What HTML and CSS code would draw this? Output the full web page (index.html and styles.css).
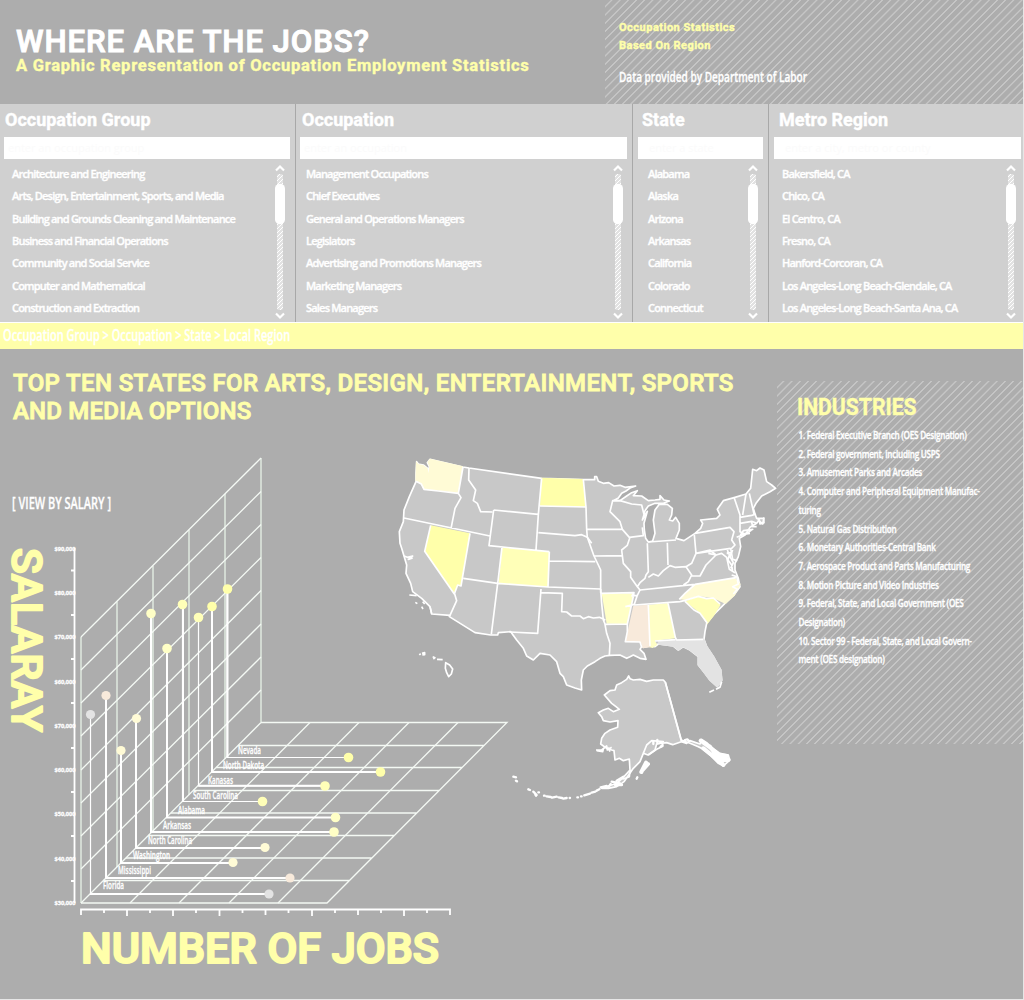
FILE: index.html
```html
<!DOCTYPE html>
<html lang="en">
<head>
<meta charset="utf-8">
<title>Where Are the Jobs?</title>
<link rel="stylesheet" href="styles.css">
</head>
<body>
<svg class="defs" width="0" height="0">
  <defs>
    <symbol id="scroll" viewBox="0 0 12 156">
      <path class="scroll-arrow" d="M2 6.5L6 2.5L10 6.5M2 149.500L6 153.500L10 149.500"/>
      <rect x="3" y="10" width="6" height="136" rx="2" fill="url(#thin)"/>
      <rect x="1" y="20" width="10" height="40" rx="4.500" fill="#fff"/>
    </symbol>
    <pattern id="thin" width="4" height="4" patternUnits="userSpaceOnUse">
      <rect width="4" height="4" fill="#e2e2e2"/>
      <path d="M-1 1L1 -1M0 4L4 0M3 5L5 3" stroke="#fff" stroke-width="1"/>
    </pattern>
  </defs>
</svg>
<header class="header">
  <div class="brand">
    <h1 class="title"><span>WHERE ARE THE JOBS?</span></h1>
    <p class="subtitle"><span>A Graphic Representation of Occupation Employment Statistics</span></p>
  </div>
  <div class="source hatch">
    <p class="source-head"><span>Occupation Statistics</span></p>
    <p class="source-head"><span class="region">Based On Region</span></p>
    <p class="source-by"><span>Data provided by Department of Labor</span></p>
  </div>
</header>
<section class="filters">
  <div class="filter group">
    <h2><span>Occupation Group</span></h2>
    <div class="search">enter an occupation group</div>
    <div class="options">
      <ul>
        <li>Architecture and Engineering</li>
        <li>Arts, Design, Entertainment, Sports, and Media</li>
        <li>Building and Grounds Cleaning and Maintenance</li>
        <li>Business and Financial Operations</li>
        <li>Community and Social Service</li>
        <li>Computer and Mathematical</li>
        <li>Construction and Extraction</li>
      </ul>
      <svg class="scroll" width="12" height="156"><use href="#scroll"/></svg>
    </div>
  </div>
  <div class="filter occupation">
    <h2><span>Occupation</span></h2>
    <div class="search">enter an occupation</div>
    <div class="options">
      <ul>
        <li>Management Occupations</li>
        <li>Chief Executives</li>
        <li>General and Operations Managers</li>
        <li>Legislators</li>
        <li>Advertising and Promotions Managers</li>
        <li>Marketing Managers</li>
        <li>Sales Managers</li>
      </ul>
      <svg class="scroll" width="12" height="156"><use href="#scroll"/></svg>
    </div>
  </div>
  <div class="filter state">
    <h2><span>State</span></h2>
    <div class="search">enter a state</div>
    <div class="options">
      <ul>
        <li>Alabama</li>
        <li>Alaska</li>
        <li>Arizona</li>
        <li>Arkansas</li>
        <li>California</li>
        <li>Colorado</li>
        <li>Connecticut</li>
      </ul>
      <svg class="scroll" width="12" height="156"><use href="#scroll"/></svg>
    </div>
  </div>
  <div class="filter metro">
    <h2><span>Metro Region</span></h2>
    <div class="search">enter a city, metro or county</div>
    <div class="options">
      <ul>
        <li>Bakersfield, CA</li>
        <li>Chico, CA</li>
        <li>El Centro, CA</li>
        <li>Fresno, CA</li>
        <li>Hanford-Corcoran, CA</li>
        <li>Los Angeles-Long Beach-Glendale, CA</li>
        <li>Los Angeles-Long Beach-Santa Ana, CA</li>
      </ul>
      <svg class="scroll" width="12" height="156"><use href="#scroll"/></svg>
    </div>
  </div>
</section>
<nav class="crumbs"><span>Occupation Group &gt; Occupation &gt; State &gt; Local Region</span></nav>
<main class="main">
  <div class="report">
    <h2 class="report-title"><span class="l1">TOP TEN STATES FOR ARTS, DESIGN, ENTERTAINMENT, SPORTS</span><span class="l2">AND MEDIA OPTIONS</span></h2>
    <svg class="figure" width="777" height="573" viewBox="0 427 777 573">
      <text class="view" x="12" y="508.500" textLength="99" lengthAdjust="spacingAndGlyphs">[ VIEW BY SALARY ]</text>
      <text class="axis-name" transform="translate(12 548) rotate(90)" textLength="184" lengthAdjust="spacingAndGlyphs">SALARAY</text>
      <text class="axis-name" x="81" y="963" textLength="358" lengthAdjust="spacingAndGlyphs">NUMBER OF JOBS</text>

      <g class="bars">
        <path d="M81 637V903M117 601.500V867M153 566V831M189 530V795M225 494V759M261 458V722"/>
      </g>
      <g class="grid">
        <path d="M81 637L261 458M81 670L261 491.500M81 703L261 524.500M81 736L261 557.500M81 770L261 590.500M81 803L261 624M81 836L261 657M81 869L261 690M81 903L261 722.500"/>
        <path d="M261 722.500H507L327 903H81M238 745.500H484M216 767.500H462M193 790.500H439M171 813H417M148 835.500H394M126 858H372M103 880.500H349"/>
        <path d="M130 903L310 722.500M179 903L359 722.500M229 903L409 722.500M278 903L458 722.500"/>
      </g>

      <g class="axis">
        <path d="M74.500 548V903M71 570.500H74M71 615H74M71 659H74M71 703H74M71 748H74M71 792H74M71 836H74M71 881H74"/>
        <path d="M81 915V909.500H450V915M127 910V916M173 910V916M219.500 910V916M265.500 910V915M312 910V916M358 910V915M404 910V916"/>
        <path d="M104 910V913M150 910V913M196 910V913M242.500 910V913M288.500 910V913M335 910V913M381 910V913M427 910V913"/>
      </g>
      <g class="ticks">
        <text x="54.500" y="551" textLength="21" lengthAdjust="spacingAndGlyphs">$90,000</text>
        <text x="54.500" y="595" textLength="21" lengthAdjust="spacingAndGlyphs">$80,000</text>
        <text x="54.500" y="639" textLength="21" lengthAdjust="spacingAndGlyphs">$70,000</text>
        <text x="54.500" y="683.500" textLength="21" lengthAdjust="spacingAndGlyphs">$60,000</text>
        <text x="54.500" y="728" textLength="21" lengthAdjust="spacingAndGlyphs">$70,000</text>
        <text x="54.500" y="772" textLength="21" lengthAdjust="spacingAndGlyphs">$60,000</text>
        <text x="54.500" y="816" textLength="21" lengthAdjust="spacingAndGlyphs">$50,000</text>
        <text x="54.500" y="860.500" textLength="21" lengthAdjust="spacingAndGlyphs">$40,000</text>
        <text x="54.500" y="905" textLength="21" lengthAdjust="spacingAndGlyphs">$30,000</text>
      </g>

      <g class="stems">
        <path d="M90.500 714V894H269M198.500 617V786H325M182.500 604V801.500H262M227 589V757.500H348"/>
        <path class="strong" d="M106 695V878H290M121 751V863H233M136 718V848H265M151 613V832H334M167 648V817.500H335M212 606V772H380M227.500 589V757M183 604V801M198.500 785.800H325M90 894H269"/>
      </g>
      <g class="names">
        <text x="238" y="754" textLength="23" lengthAdjust="spacingAndGlyphs">Nevada</text>
        <text x="223" y="769" textLength="41" lengthAdjust="spacingAndGlyphs">North Dakota</text>
        <text x="208" y="784" textLength="25" lengthAdjust="spacingAndGlyphs">Kanasas</text>
        <text x="193" y="799" textLength="45" lengthAdjust="spacingAndGlyphs">South Carolina</text>
        <text x="178" y="814" textLength="27" lengthAdjust="spacingAndGlyphs">Alabama</text>
        <text x="163" y="829" textLength="28" lengthAdjust="spacingAndGlyphs">Arkansas</text>
        <text x="148" y="844" textLength="44" lengthAdjust="spacingAndGlyphs">North Carolina</text>
        <text x="133" y="859" textLength="37" lengthAdjust="spacingAndGlyphs">Washington</text>
        <text x="118" y="874" textLength="33" lengthAdjust="spacingAndGlyphs">Mississippi</text>
        <text x="103" y="889" textLength="21" lengthAdjust="spacingAndGlyphs">Florida</text>
      </g>
      <g class="c1"><circle cx="90.500" cy="714.500" r="4.600"/><circle cx="269" cy="894" r="4.600"/></g>
      <g class="c2"><circle cx="106" cy="695.500" r="4.600"/><circle cx="290" cy="878" r="4.600"/></g>
      <g class="c3"><circle cx="121" cy="750.500" r="4.600"/><circle cx="233" cy="862.500" r="4.600"/><circle cx="136.500" cy="718.500" r="4.600"/><circle cx="265" cy="847.500" r="4.600"/></g>
      <g class="c4"><circle cx="151" cy="613.500" r="4.800"/><circle cx="334" cy="832" r="4.800"/><circle cx="167" cy="648.500" r="4.800"/><circle cx="335.500" cy="817.500" r="4.800"/></g>
      <g class="c5"><circle cx="182.500" cy="604.500" r="4.800"/><circle cx="262.500" cy="801.500" r="4.800"/><circle cx="198.500" cy="617.500" r="4.800"/><circle cx="325" cy="786" r="4.800"/></g>
      <g class="c6"><circle cx="212" cy="606.500" r="4.800"/><circle cx="380.500" cy="772" r="4.800"/><circle cx="227.500" cy="589" r="4.800"/><circle cx="348.500" cy="757.500" r="4.800"/></g>

      <g class="map" transform="translate(390 440) scale(.33333)">
        <path class="land" d="M80 65L85 72L100 75L113 85L115 100L118 80L112 68L120 58L219 81L237 84L455 115L580 119L614 119L614 110L620 110L625 124L640 130L656 128L672 138L690 136L705 142L737 138L722 143L708 153L695 160L685 174L670 182L690 182L710 168L725 158L742 152L730 167L755 168L775 182L795 180L810 178L810 167L822 180L838 183L820 190L795 190L775 198L765 212L762 224L757 240L772 214L762 250L763 270L767 295L775 306L788 303L795 280L790 240L795 210L808 193L832 193L847 205L845 225L838 240L848 243L857 232L868 250L868 270L858 295L882 302L915 280L932 265L938 250L932 240L980 235L990 225L982 208L1000 182L1035 172L1068 162L1082 145L1088 88L1100 92L1110 84L1122 90L1130 125L1145 135L1157 145L1140 155L1115 168L1098 190L1090 205L1095 222L1100 235L1121 235L1122 248L1110 252L1108 240L1100 250L1080 262L1065 285L1048 295L1052 320L1045 350L1035 370L1035 390L1045 415L1050 440L1032 465L1005 490L990 505L970 525L950 550L945 575L942 598L950 620L970 650L992 690L995 720L982 740L960 720L945 700L925 675L925 650L900 630L880 620L865 630L850 618L805 612L795 620L780 618L760 622L755 620L750 628L762 640L768 658L750 655L730 645L720 650L710 655L690 645L660 646L645 648L630 655L615 665L592 678L580 690L574 720L575 750L555 744L530 735L520 710L510 700L500 665L480 645L450 640L430 660L410 648L400 625L380 600L362 575L325 578L323 585L302 585L255 578L178 530L180 526L125 522L120 500L95 475L68 455L62 430L48 400L50 375L42 348L35 325L30 310L28 275L40 245L42 210L58 170L78 125L78 100Z"/>
        <g class="c3">
          <path d="M78 63L85 72L100 75L113 85L115 100L118 80L112 66L120 56L219 79L205 160L160 154L100 148L92 132L76 122Z"/>
          <path d="M915 432L1035 413L1052 432L1034 467L1007 492L970 475L925 468L885 480L868 478Z"/>
        </g>
        <path class="c6" d="M453 113L578 117L588 201L450 198ZM122 256L240 280L213 438L203 435L193 462L104 334Z"/>
        <path class="c5" d="M336 322L478 335L474 441L326 432ZM885 484L925 469L950 477L970 474L992 494L972 527L952 553L930 520Z"/>
        <path class="c4" d="M635 460L732 460L712 552L650 551ZM777 494L834 489L856 595L795 602L802 614L788 624L778 622Z"/>
        <path class="c2" d="M730 497L777 494L780 622L758 625L752 606L706 605Z"/>
        <path class="c1" d="M804 602L860 598L930 600L942 595L952 618L972 648L995 690L998 722L982 743L958 722L943 702L923 675L923 650L900 632L880 622L865 632L850 620L805 614Z"/>
        <g class="borders">
          <path d="M219 81L205 160L145 153L102 148L94 132L78 124M205 160L213 173L195 205L183 266M42 234L300 288M122 256L104 334L193 462L203 435L213 438L240 280M193 458L200 482L180 526M237 84L236 120L257 150L250 182L262 190L272 215L307 216M311 210L445 223M311 210L297 317L478 335M455 115L445 223L438 330M450 198L588 201M445 278L555 287L575 284L592 292L605 310M478 335L474 441M478 363L616 365M336 322L323 432M220 415L323 430L474 441L632 447M323 430L304 583M453 447L443 580L360 576M453 458L517 460L515 515L530 516L545 528L570 528L580 536L595 530L610 534L628 532L646 540M632 447L635 490L640 540L645 552"/>
          <path d="M580 119L588 201L590 268L592 292L612 348L625 375L632 390L632 458M588 268L695 268M692 182L668 182L660 215L690 245L697 268L718 292L760 287L757 262M720 292L712 316L695 330L697 347L612 348M697 347L700 370L722 395L722 412L742 440L750 450M632 460L732 458L726 468L742 466M732 460L712 552L645 553L650 580L660 610L658 646M712 552L712 575L706 605L750 606L755 622M742 466L733 493L706 500M733 495L870 485M775 495L780 618M834 489L856 592L860 600L940 598M795 603L856 599M750 450L915 433L1038 413M915 433L885 460L868 478M750 450L742 466M742 440L750 428L765 415L768 405L775 395L772 310M775 412L790 402L805 408L820 392L840 377L855 382L888 380L905 405L895 425L880 435M888 380L905 370L918 340L913 285M832 308L834 375M775 306L858 300M690 182L725 192L755 195L762 224M918 340L1022 325M915 280L1020 262L1032 275L1025 300L1035 315L1022 328M905 408L930 408L948 375L978 345L955 340M978 345L960 330L918 340M1032 172L1050 225L1050 275L1065 282M1050 232L1085 226L1098 222M1068 162L1058 225M1078 160L1092 222M1050 250L1085 244L1100 250M1084 244L1088 258M1022 325L1028 358L1042 362M870 485L885 481L925 469L950 476L970 474L990 492M885 484L912 510L930 520L952 550"/>
          <path d="M978 345L995 340L1010 352L1018 388L1035 398M1012 330L1018 345L1014 360L1025 375L1028 395M1028 330L1020 350L1030 368L1022 385M1025 405L1040 410L1045 432L1028 440L1042 448L1030 462M1010 340L1025 338M1040 292L1070 280L1088 268L1060 272L1052 284L1080 280M1085 260L1100 260M1102 235L1108 240M42 348L52 352L68 348L55 358L68 354"/>
        </g>
        <path class="coast" d="M995 725L990 742L978 748M972 750L958 757M58 465L80 467M76 487L82 491M98 485L104 492M95 500L99 507M120 500L125 521M1122 232L1118 252L1104 240"/>
        <path class="coast" d="M88 645L92 641M96 640L104 638L104 644L97 645M128 650L135 653L130 657M141 658L158 659M167 668L179 675L188 687L184 702L176 710L170 698L166 685Z"/>
        <path class="land" d="M643 765L660 752L675 750L680 735L695 728L710 718L716 708L720 716L730 720L750 718L770 724L790 720L820 720L826 727L874 900L900 910L925 920L940 928L960 945L985 970L1000 978L1020 960L1014 945L990 940L965 922L950 908L935 898L930 912L900 902L890 910L874 905L848 914L830 908L800 912L795 930L774 945L760 940L750 965L730 985L702 1025L695 1030L680 1040L655 1045L635 1045L680 1030L697 1015L720 990L718 957L700 962L688 955L675 960L672 932L665 930L650 925L632 912L635 895L645 880L660 870L683 862L684 842L660 846L640 842L635 830L625 818L640 810L655 805L670 815L688 808L678 800L665 790Z"/>
        <path class="coast" d="M826 727L874 903M760 940L770 915L785 902L820 905L800 912M720 990L718 1010L697 1018M775 945L800 928L820 918M618 930L635 930L650 918L652 930L665 922M620 932L638 935L640 928M655 922L660 935"/>
        <path class="islands" d="M370 1010L378 1012M378 1022L381 1024M415 1048L420 1050M430 1055L440 1065M436 1064L438 1067M445 1057H447M462 1067H464M470 1069L482 1071M486 1073L500 1070M506 1072L516 1074M520 1076L530 1074M539 1074H540M562 1072H564M573 1069H575M583 1066L600 1061M605 1058L616 1055M620 1052L628 1048M632 1042L650 1038M655 1042L662 1032M665 1025L690 1030M675 1035L696 1035M740 1016L742 1012M680 1022L700 1010M790 905V912M802 900V908M812 920L818 915M885 900L892 898L898 904"/>
        <path class="thick" d="M754 996L768 968M758 990L774 972M932 902L960 922L985 945L1012 948M940 925L965 945L995 970M960 920L975 940L1000 960L1015 960M975 938L1000 975"/>
      </g>
    </svg>
  </div>
  <aside class="industries hatch">
    <h2><span>INDUSTRIES</span></h2>
    <ol>
      <li>1. Federal Executive Branch (OES Designation)</li>
      <li>2. Federal government, including USPS</li>
      <li>3. Amusement Parks and Arcades</li>
      <li>4. Computer and Peripheral Equipment Manufac-<br>turing</li>
      <li>5. Natural Gas Distribution</li>
      <li>6. Monetary Authorities-Central Bank</li>
      <li>7. Aerospace Product and Parts Manufacturing</li>
      <li>8. Motion Picture and Video Industries</li>
      <li>9. Federal, State, and Local Government (OES<br>Designation)</li>
      <li>10. Sector 99 - Federal, State, and Local Govern-<br>ment (OES designation)</li>
    </ol>
  </aside>
</main>
</body>
</html>
```
FILE: styles.css
```css
* { box-sizing: border-box; margin: 0; padding: 0; }
body {
  width: 1024px;
  height: 1000px;
  overflow: hidden;
  background: #adadad;
  color: #fff;
  font-family: "Open Sans", "Noto Sans", sans-serif;
  border-right: 1px solid #e6e6e6;
  border-bottom: 1px solid #e6e6e6;
}
.defs { display: block; height: 0; }
span { display: inline-block; transform-origin: 0 50%; white-space: nowrap; }
ul, ol { list-style: none; }

.hatch {
  background: repeating-linear-gradient(135deg, #adadad 0 3.900px, #c5c5c5 4.400px 5.300px, #adadad 5.800px);
}

.header { display: flex; height: 104px; }
.brand { width: 605px; padding: 22px 0 0 16px; }
.title, .subtitle, .source-head, .filter h2, .report-title, .industries h2 {
  font-family: Roboto, "Liberation Sans", sans-serif;
  font-weight: 700;
  -webkit-text-stroke: .4px currentColor;
}
.title { font-size: 32px; line-height: 38px; font-weight: 500; -webkit-text-stroke-width: 1px; letter-spacing: .9px; }
.title span { transform: scaleX(.977); }
.subtitle { font-size: 16.500px; line-height: 12px; color: #ffffaa; letter-spacing: .75px; }
.source { flex: 1; padding: 19px 0 0 14px; }
.source-head { font-size: 11px; line-height: 18px; color: #ffffaa; letter-spacing: .5px; }
.source-by { margin-top: 12px; font-size: 15px; line-height: 18px; font-weight: 600; -webkit-text-stroke: .3px #fff; }
.source-by span { transform: scaleX(.67); }

.filters { display: flex; height: 218px; background: #d0d0d0; }
.filter { border-right: 1px solid #a8a8a8; }
.filter h2 { height: 33px; padding: 5px 0 0 5px; font-size: 18px; line-height: 22px; }
.search {
  height: 22px;
  padding-left: 4px;
  background: #fff;
  color: #fbfbfb;
  font-size: 11px;
  line-height: 22px;
}
.state .search, .metro .search { padding-left: 11px; }
.options { display: flex; justify-content: space-between; padding-top: 3px; }
.options ul { padding-left: 8px; }
.options li {
  height: 22.350px;
  font-size: 11px;
  line-height: 23px;
  font-weight: 600;
  letter-spacing: -.8px;
  -webkit-text-stroke: .35px #fff;
  white-space: nowrap;
}
.scroll { flex: none; margin: 2px 4px 0 0; }
.scroll-arrow { fill: none; stroke: #fff; stroke-width: 2.200; }
.group { width: 296px; padding: 0 5px 0 4px; }
.group h2, .occupation h2 { padding-left: 2px; }
.group h2 { padding-left: 1px; }
.state h2 { padding-left: 4px; }
.occupation { width: 337px; padding: 0 5px 0 4px; }
.occupation .options ul { padding-left: 6px; }
.occupation .scroll { margin-right: 3px; }
.state { width: 136px; padding: 0 5px; }
.state .options ul { padding-left: 10px; }
.metro { flex: 1; border: 0; padding: 0 2px 0 5px; }
.metro .scroll { margin-right: 4px; }

.crumbs {
  height: 27px;
  border-top: 1px solid #fff;
  background: #ffffaa;
  padding-left: 3px;
  font-size: 16px;
  line-height: 25px;
  font-weight: 600;
  -webkit-text-stroke: .3px #fff;
}
.crumbs span { transform: scaleX(.685); }

.main { display: flex; align-items: flex-start; }
.report { width: 777px; height: 650px; }
.report-title { height: 78px; padding: 20px 0 0 13px; font-size: 24px; line-height: 28px; color: #ffffaa; font-weight: 500; -webkit-text-stroke-width: .9px; letter-spacing: .37px; }
.report-title span { display: block; width: max-content; }
.report-title .l2 { letter-spacing: .2px; }
.figure { display: block; }
.industries { flex: 1; height: 363px; margin-top: 32px; padding: 14px 0 0 20px; }
.industries h2 { font-size: 23px; line-height: 26px; color: #ffffaa; }
.industries h2 span { transform: scaleX(.92); }
.industries ol { padding: 5px 0 0 2px; transform: scaleX(.74); transform-origin: 0 0; }
.industries li { font-size: 11px; line-height: 18.700px; font-weight: 600; letter-spacing: -.35px; white-space: nowrap; -webkit-text-stroke: .35px #fff; }

.view { font-size: 16px; font-weight: 600; fill: #fff; stroke: #fff; stroke-width: .3; }
.axis-name {
  font-family: Roboto, "Liberation Sans", sans-serif;
  font-size: 42px;
  font-weight: 500;
  fill: #ffffaa;
  stroke: #ffffaa;
  stroke-width: 2;
  stroke-linejoin: round;
}
.bars path { stroke: #d7dfd7; stroke-width: 1.800; }
.grid path { fill: none; stroke: #f4f9f4; stroke-width: 1.300; }
.axis path { fill: none; stroke: #fff; stroke-width: 1.800; }
.ticks text { font-size: 6px; font-weight: 700; fill: #fff; stroke: #fff; stroke-width: .3; }
.stems path { fill: none; stroke: #fff; stroke-width: 1.200; }
.stems .strong { stroke-width: 2; }
.names text { font-size: 10.500px; font-weight: 600; fill: #fff; stroke: #fff; stroke-width: .3; }
.c1 { fill: #e3e3e3; }
.c2 { fill: #f8eadb; }
.c3 { fill: #fffbd6; }
.c4 { fill: #ffffc6; }
.c5 { fill: #ffffb8; }
.c6 { fill: #ffffaa; }
.land { fill: #c8c8c8; stroke: #fff; stroke-width: 5; stroke-linejoin: round; }
.borders path, .coast, .islands, .thick { fill: none; stroke: #fff; stroke-width: 5; stroke-linejoin: round; }
.islands { stroke-width: 7; stroke-linecap: round; }
.thick { stroke-width: 12; stroke-linecap: round; }
```
